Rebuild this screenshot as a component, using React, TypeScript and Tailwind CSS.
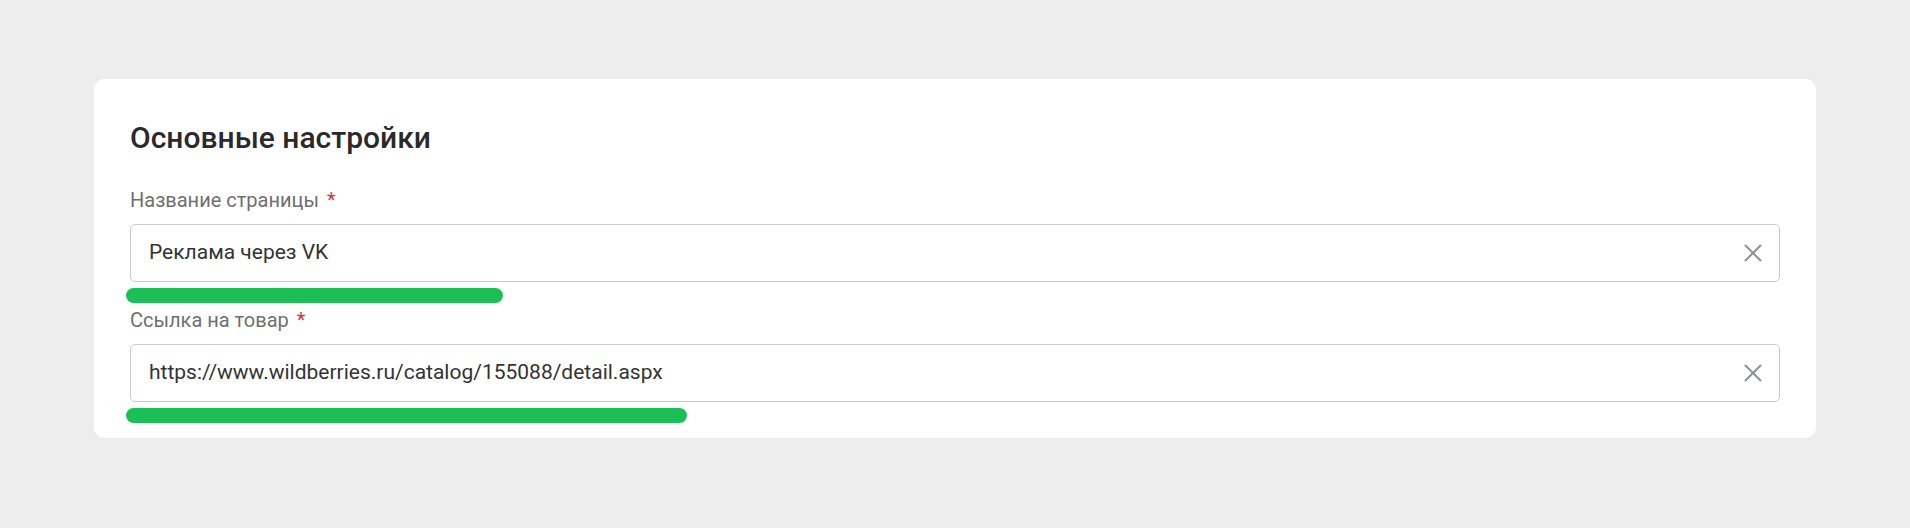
const fields = [
  { label: 'Название страницы', value: 'Реклама через VK', bar: 377 },
  { label: 'Ссылка на товар', value: 'https://www.wildberries.ru/catalog/155088/detail.aspx', bar: 561 },
];

function ClearIcon() {
  return (
    <svg width="18" height="18" viewBox="0 0 18 18" fill="none" stroke="#8b9099" strokeWidth="2" strokeLinecap="round">
      <line x1="1.5" y1="1.5" x2="16.5" y2="16.5" />
      <line x1="16.5" y1="1.5" x2="1.5" y2="16.5" />
    </svg>
  );
}

export default function App() {
  return (
    <div className="min-h-[528px] bg-[#ededed] pt-[79px] pl-[94px] pr-[94px] font-['Roboto',sans-serif]">
      <div className="bg-white rounded-[11px] pt-[42px] pb-[15px] px-[36px]">
        <h2 className="text-[30px] leading-[34px] font-medium text-[#2a2a2a]">Основные настройки</h2>
        <div className="mt-[33px] flex flex-col gap-[5px]">
          {fields.map(f => (
            <div key={f.label} className="flex flex-col">
              <label className="text-[20px] leading-[24px] text-[#6f6f6f]">
                {f.label}
                <span className="ml-[8px] text-[#d2344f]">*</span>
              </label>
              <div className="mt-[12px] h-[58px] border border-[#c8cbd0] rounded-[5px] flex items-center pl-[18px] pr-[17px]">
                <span className="flex-1 text-[21px] text-[#333333]">{f.value}</span>
                <ClearIcon />
              </div>
              <div
                className="mt-[6px] -ml-[4px] h-[15px] rounded-full bg-[#1cbf55]"
                style={{ width: f.bar }}
              />
            </div>
          ))}
        </div>
      </div>
    </div>
  );
}
